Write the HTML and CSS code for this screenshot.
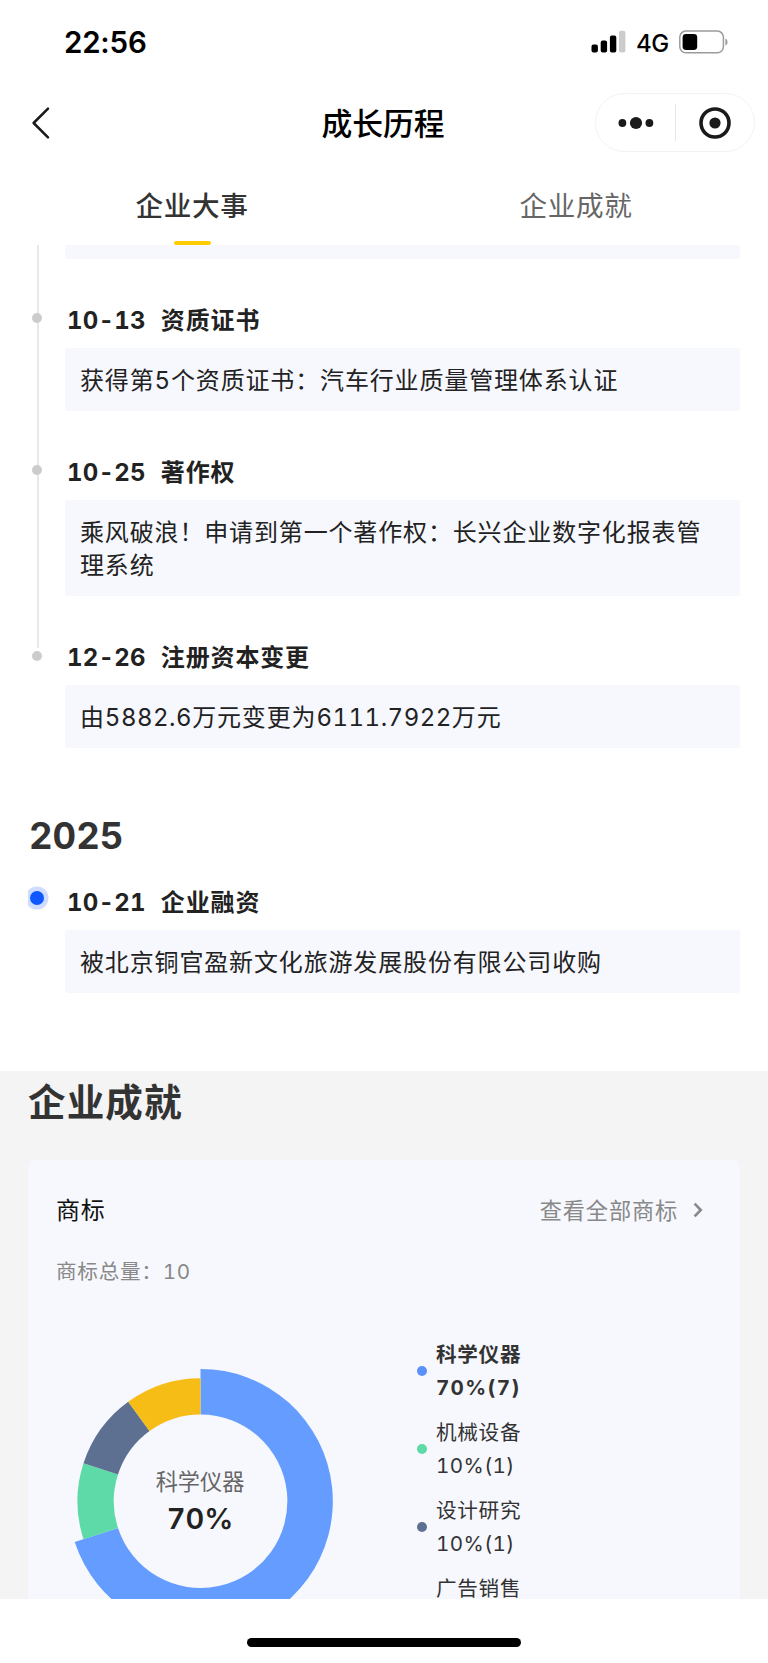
FILE: index.html
```html
<!DOCTYPE html>
<html lang="zh-CN">
<head>
    <meta charset="UTF-8">
    <meta name="viewport" content="width=device-width, initial-scale=1.0">
    <title>成长历程</title>
    <link rel="stylesheet" href="styles.css">
</head>
<body>
    <div class="phone">
        <div class="status-bar">
            <span class="status-time">22:56</span>
            <div class="status-right">
                <svg class="signal" width="36" height="24" viewBox="0 0 36 24">
                    <rect x="0.5" y="14.5" width="6.4" height="8" rx="2"/>
                    <rect x="9.7" y="10.5" width="6.4" height="12" rx="2"/>
                    <rect x="18.9" y="5.5" width="6.4" height="17" rx="2"/>
                    <rect x="28" y="0.8" width="6.4" height="21.7" rx="2" fill="#cccccc"/>
                </svg>
                <span class="network">4G</span>
                <svg class="battery" width="50" height="24" viewBox="0 0 50 24">
                    <rect x="0.8" y="1.1" width="43.6" height="21.6" rx="6" fill="none" stroke="#9b9b9b" stroke-width="1.5"/>
                    <rect x="3.6" y="4.1" width="14.6" height="15.8" rx="3.4"/>
                    <path d="M46.4 8.4 C49.2 9.6 49.2 14.4 46.4 15.6 Z" fill="#9b9b9b"/>
                </svg>
            </div>
        </div>

        <div class="nav-bar">
            <svg class="back" width="20" height="34" viewBox="0 0 20 34">
                <path d="M18 2.6 L3.6 17 L18 31.4" fill="none" stroke="#1a1a1a" stroke-width="2.5" stroke-linecap="round" stroke-linejoin="round"/>
            </svg>
            <h1 class="nav-title">成长历程</h1>
            <div class="capsule">
                <svg class="more" width="36" height="14" viewBox="0 0 36 14">
                    <circle cx="4.4" cy="7" r="3.9"/>
                    <circle cx="18" cy="7" r="6.1"/>
                    <circle cx="31.4" cy="7" r="3.9"/>
                </svg>
                <span class="capsule-line"></span>
                <svg class="target" width="34" height="34" viewBox="0 0 34 34">
                    <circle cx="17" cy="17" r="14" fill="none" stroke="#1a1a1a" stroke-width="3.6"/>
                    <circle cx="17" cy="17" r="5.6"/>
                </svg>
            </div>
        </div>

        <div class="tabs">
            <div class="tab active">企业大事</div>
            <div class="tab">企业成就</div>
        </div>

        <div class="content">
            <div class="timeline">
                <div class="event-group">
                    <div class="event-box cut"></div>
                    <div class="event">
                        <div class="event-title"><span class="date">10-13</span><span>资质证书</span></div>
                        <div class="event-box">获得第5个资质证书：汽车行业质量管理体系认证</div>
                    </div>
                    <div class="event">
                        <div class="event-title"><span class="date">10-25</span><span>著作权</span></div>
                        <div class="event-box">乘风破浪！申请到第一个著作权：长兴企业数字化报表管理系统</div>
                    </div>
                    <div class="event">
                        <div class="event-title"><span class="date">12-26</span><span>注册资本变更</span></div>
                        <div class="event-box">由<span class="num">5882.6</span>万元变更为<span class="num">6111.7922</span>万元</div>
                    </div>
                </div>

                <h2 class="year">2025</h2>
                <div class="event current">
                    <div class="event-title"><span class="date">10-21</span><span>企业融资</span></div>
                    <div class="event-box">被北京铜官盈新文化旅游发展股份有限公司收购</div>
                </div>
            </div>

            <div class="achievement">
                <h2 class="section-title">企业成就</h2>
                <div class="card">
                    <div class="card-header">
                        <span class="card-name">商标</span>
                        <span class="card-more">查看全部商标
                            <svg width="10" height="16" viewBox="0 0 10 16">
                                <path d="M1.6 1.6 L7.8 8 L1.6 14.4" fill="none" stroke="#888888" stroke-width="2.6"/>
                            </svg>
                        </span>
                    </div>
                    <div class="card-total">商标总量：10</div>
                    <div class="chart-row">
                        <div class="chart">
                            <!-- 环形图：70% / 10% / 10% / 10% -->
                            <svg width="270" height="270" viewBox="-135.5 -135.2 270 270">
                                <path fill="#649dff" d="M0 -132.3 A132.3 132.3 0 1 1 -125.8 40.9 L-82.5 26.8 A86.8 86.8 0 1 0 0 -86.8 Z"/>
                                <path fill="#5ddaa8" d="M-117 38 A123 123 0 0 1 -117 -38 L-82.5 -26.8 A86.8 86.8 0 0 0 -82.5 26.8 Z"/>
                                <path fill="#5d7092" d="M-117 -38 A123 123 0 0 1 -72.3 -99.5 L-51 -70.2 A86.8 86.8 0 0 0 -82.5 -26.8 Z"/>
                                <path fill="#f6bd16" d="M-72.3 -99.5 A123 123 0 0 1 0 -123 L0 -86.8 A86.8 86.8 0 0 0 -51 -70.2 Z"/>
                            </svg>
                            <div class="chart-label">
                                <span class="chart-name">科学仪器</span>
                                <span class="chart-value">70%</span>
                            </div>
                        </div>
                        <ul class="legend">
                            <li class="legend-item blue"><span>科学仪器<br><b>70%(7)</b></span></li>
                            <li class="legend-item green"><span>机械设备<br><b>10%(1)</b></span></li>
                            <li class="legend-item slate"><span>设计研究<br><b>10%(1)</b></span></li>
                            <li class="legend-item"><span>广告销售</span></li>
                        </ul>
                    </div>
                </div>
            </div>
        </div>

        <div class="home-bar"><span></span></div>
    </div>
</body>
</html>
```
FILE: styles.css
```css
* {
    margin: 0;
    padding: 0;
    box-sizing: border-box;
}

body {
    background: #ffffff;
    font-family: Inter, "Noto Sans CJK SC", sans-serif;
    color: #222222;
}

svg {
    display: block;
    flex: none;
}

.phone {
    width: 768px;
    height: 1663px;
    display: flex;
    flex-direction: column;
    overflow: hidden;
}

/* 状态栏 */
.status-bar {
    height: 84px;
    flex: none;
    display: flex;
    justify-content: space-between;
    align-items: center;
    padding: 0 39px 0 64px;
    color: #000000;
}

.status-time {
    font-size: 29.5px;
    font-weight: 600;
    letter-spacing: -0.2px;
}

.status-right {
    display: flex;
    align-items: center;
}

.network {
    width: 33px;
    margin: 2px 10px 0 9px;
    font-size: 24px;
    font-weight: 500;
    letter-spacing: -0.4px;
    white-space: nowrap;
}

/* 导航栏 */
.nav-bar {
    height: 77px;
    flex: none;
    display: flex;
    align-items: center;
    padding: 0 13px 0 30px;
}

.nav-title {
    flex: 1;
    padding: 2px 0 0 121px;
    font-size: 30.8px;
    font-weight: 500;
    line-height: 44px;
    text-align: center;
    color: #000000;
}

.capsule {
    width: 160px;
    height: 59px;
    display: flex;
    align-items: center;
    border: 1px solid #f3f3f3;
    border-radius: 30px;
    padding-left: 22px;
    fill: #1a1a1a;
}

.capsule-line {
    width: 1px;
    height: 37px;
    margin: 0 22px 0 21px;
    background: #e6e6e6;
}

.tabs {
    height: 84px;
    flex: none;
    display: flex;
}

.tab {
    flex: 1;
    display: flex;
    flex-direction: column;
    align-items: center;
    padding-top: 24px;
    font-size: 27.6px;
    line-height: 42px;
    letter-spacing: 0.7px;
    color: #666666;
}

.tab.active {
    font-weight: 500;
    color: #333333;
}

.tab.active::after {
    content: "";
    width: 37px;
    height: 4px;
    margin-top: 14px;
    border-radius: 2px;
    background: #ffcc00;
}

.content {
    height: 1353.5px;
    flex: none;
    overflow: hidden;
    font-variant-numeric: tabular-nums;
}

/* 时间轴 */
.timeline {
    height: 826px;
    padding: 0 28px;
}

.event-group {
    position: relative;
}

.event-group::before {
    content: "";
    position: absolute;
    left: 9px;
    top: 0;
    width: 1.5px;
    height: 403px;
    background: #e8e8e8;
}

.event {
    position: relative;
    padding-top: 43.2px;
}

.event::before {
    content: "";
    position: absolute;
    left: 4px;
    top: 54.5px;
    width: 10px;
    height: 10px;
    border-radius: 50%;
    background: #cccccc;
}

.event-title {
    display: flex;
    gap: 15px;
    height: 36px;
    margin: 0 0 10px 39px;
    font-size: 24px;
    font-weight: 700;
    line-height: 38px;
    letter-spacing: 0.85px;
}

.event-title .date {
    letter-spacing: 0.25px;
}

.event-box {
    margin-left: 37px;
    padding: 16px 35px 13.7px 15px;
    border-radius: 3px;
    background: #f7f8fe;
    font-size: 24px;
    line-height: 33.3px;
    letter-spacing: 0.85px;
}

.event-box .num {
    letter-spacing: 0.5px;
}

.event-box.cut {
    height: 13.5px;
    padding: 0;
    border-radius: 0 0 3px 3px;
}

.year {
    height: 50px;
    margin: 61.5px 0 24px 1px;
    font-size: 36.5px;
    font-weight: 700;
    line-height: 52px;
    letter-spacing: 0;
    color: #333333;
}

.event.current {
    padding-top: 0;
}

.event.current::before {
    left: 2px;
    top: 7px;
    width: 14px;
    height: 14px;
    background: #0f57ff;
    box-shadow: 0 0 0 4.5px #cddcff;
    clip-path: inset(-5px -5px -5px -2px);
}

/* 企业成就 */
.achievement {
    padding: 7px 28px 0;
    background: #f4f4f4;
}

.section-title {
    height: 82px;
    font-size: 37.6px;
    font-weight: 700;
    line-height: 49px;
    letter-spacing: 1.1px;
    color: #333333;
}

.card {
    height: 560px;
    padding: 31px 37px 0 28px;
    border-radius: 6px;
    background: #f7f8fe;
}

.card-header {
    display: flex;
    justify-content: space-between;
    align-items: center;
    height: 40px;
}

.card-name {
    font-size: 24px;
    line-height: 36px;
    letter-spacing: 0.7px;
    color: #111111;
}

.card-more {
    display: flex;
    align-items: center;
    gap: 15px;
    font-size: 22.2px;
    line-height: 36px;
    letter-spacing: 0.85px;
    color: #888888;
}

.card-more svg {
    margin-top: -2px;
}

.card-total {
    margin-top: 25px;
    font-size: 20.6px;
    line-height: 32px;
    letter-spacing: 0.75px;
    color: #888888;
}

.chart-row {
    display: flex;
    margin-top: 48px;
}

.chart {
    position: relative;
    width: 270px;
    height: 270px;
    margin: 30px 0 0 9px;
}

.chart-label {
    position: absolute;
    inset: 0;
    display: flex;
    flex-direction: column;
    align-items: center;
    padding-top: 98.5px;
}

.chart-name {
    font-size: 22.2px;
    line-height: 34px;
    color: #666666;
}

.chart-value {
    font-size: 29px;
    font-weight: 600;
    line-height: 40px;
}

.legend {
    margin-left: 82px;
    list-style: none;
}

.legend-item {
    display: flex;
    align-items: center;
    gap: 9px;
    height: 70px;
    margin-bottom: 8px;
    font-size: 20.6px;
    line-height: 33px;
    letter-spacing: 0.7px;
    color: #333333;
}

.legend-item::before {
    content: "";
    width: 10px;
    height: 10px;
    border-radius: 50%;
}

.legend-item:last-child {
    align-items: flex-start;
    padding-top: 2px;
}

.legend-item b {
    font-weight: inherit;
    letter-spacing: 0.4px;
}

.legend-item.blue {
    font-weight: 700;
}

.legend-item.blue b {
    letter-spacing: 1.3px;
}

.legend-item.blue::before {
    background: #5b8ff9;
}

.legend-item.green::before {
    background: #5ddaa8;
}

.legend-item.slate::before {
    background: #5d7092;
}

.home-bar {
    flex: 1;
    display: flex;
    justify-content: center;
    padding-top: 39px;
    background: #ffffff;
}

.home-bar span {
    width: 274px;
    height: 9.5px;
    border-radius: 5px;
    background: #000000;
}
```
